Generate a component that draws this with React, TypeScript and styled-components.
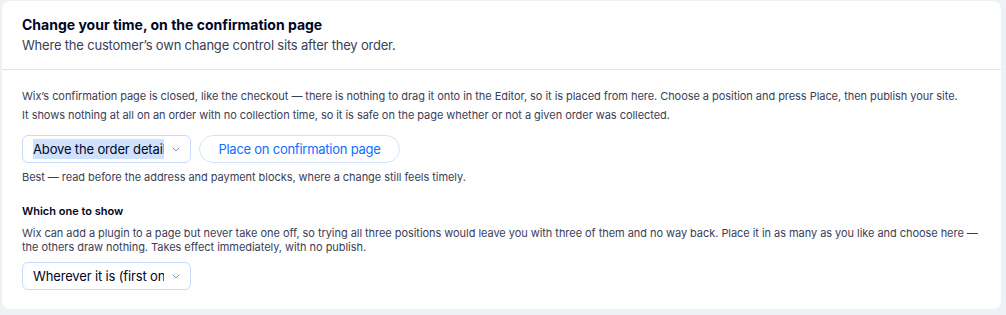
import React from 'react';
import styled, { createGlobalStyle } from 'styled-components';

const GlobalStyle = createGlobalStyle`
  html, body {
    margin: 0;
    padding: 0;
    background: #eef1f6;
  }
  body {
    font-family: 'Inter', 'Noto Sans', Arial, sans-serif;
    -webkit-font-smoothing: antialiased;
  }
`;

const Page = styled.div`
  padding: 1px 5px 6px 2px;
`;

const Card = styled.section`
  background: #ffffff;
  border-radius: 8px;
  overflow: hidden;
`;

const CardHeader = styled.header`
  padding: 14px 20px 14px;
  border-bottom: 1px solid #dfe5eb;
`;

const Title = styled.h2`
  margin: 0;
  font-size: 14px;
  line-height: 20px;
  font-weight: 700;
  color: #000624;
`;

const Subtitle = styled.p`
  margin: 0;
  font-size: 13px;
  line-height: 20px;
  letter-spacing: -0.2px;
  color: #3b4057;
`;

const CardBody = styled.div`
  padding: 17px 20px 19px;
`;

const Text = styled.p<{ lh?: number }>`
  margin: 0;
  font-size: 11px;
  line-height: ${p => p.lh ?? 19}px;
  letter-spacing: -0.05px;
  color: #3b4057;
`;

const Controls = styled.div`
  display: flex;
  align-items: center;
  gap: 8px;
  margin: 10px 0 6px;
`;

const Select = styled.div`
  box-sizing: border-box;
  width: 169px;
  height: 28px;
  display: flex;
  align-items: center;
  gap: 8px;
  padding: 0 10px;
  border: 1px solid #c6dbfd;
  border-radius: 6px;
  background: #fff;
  font-size: 13px;
  letter-spacing: -0.15px;
  color: #000624;
`;

const SelectValue = styled.span<{ selected?: boolean }>`
  flex: 1;
  min-width: 0;
  white-space: nowrap;
  overflow: hidden;
  line-height: 20px;
  background: ${p => (p.selected ? '#cfe1fc' : 'transparent')};
`;

const Chevron = () => (
  <svg width="8" height="5" viewBox="0 0 8 5" fill="none">
    <path d="M1 1l3 3 3-3" stroke="#7a92c6" strokeWidth="1" strokeLinecap="round" strokeLinejoin="round" />
  </svg>
);

const PillButton = styled.button`
  box-sizing: border-box;
  height: 28px;
  width: 201px;
  padding: 0;
  border: 1px solid #d3e3fd;
  border-radius: 14px;
  background: #fff;
  color: #116dff;
  font-family: inherit;
  font-size: 13px;
  letter-spacing: -0.25px;
  white-space: nowrap;
  cursor: pointer;
`;

const Label = styled.h3`
  margin: 18px 0 7px;
  font-size: 11px;
  line-height: 16px;
  font-weight: 600;
  color: #000624;
`;

const Gap = styled.div`
  height: 8px;
`;

export default function App() {
  return (
    <Page>
      <GlobalStyle />
      <Card>
        <CardHeader>
          <Title>Change your time, on the confirmation page</Title>
          <Subtitle>Where the customer’s own change control sits after they order.</Subtitle>
        </CardHeader>
        <CardBody>
          <Text>
            Wix’s confirmation page is closed, like the checkout — there is nothing to drag it onto in the Editor, so it is placed from here. Choose a position and press Place, then publish your site.
          </Text>
          <Text>
            It shows nothing at all on an order with no collection time, so it is safe on the page whether or not a given order was collected.
          </Text>
          <Controls>
            <Select>
              <SelectValue selected>Above the order details</SelectValue>
              <Chevron />
            </Select>
            <PillButton>Place on confirmation page</PillButton>
          </Controls>
          <Text lh={16}>Best — read before the address and payment blocks, where a change still feels timely.</Text>
          <Label>Which one to show</Label>
          <Text lh={14}>
            Wix can add a plugin to a page but never take one off, so trying all three positions would leave you with three of them and no way back. Place it in as many as you like and choose here — the others draw nothing. Takes effect immediately, with no publish.
          </Text>
          <Gap />
          <Select>
            <SelectValue>Wherever it is (first one found)</SelectValue>
            <Chevron />
          </Select>
        </CardBody>
      </Card>
    </Page>
  );
}
